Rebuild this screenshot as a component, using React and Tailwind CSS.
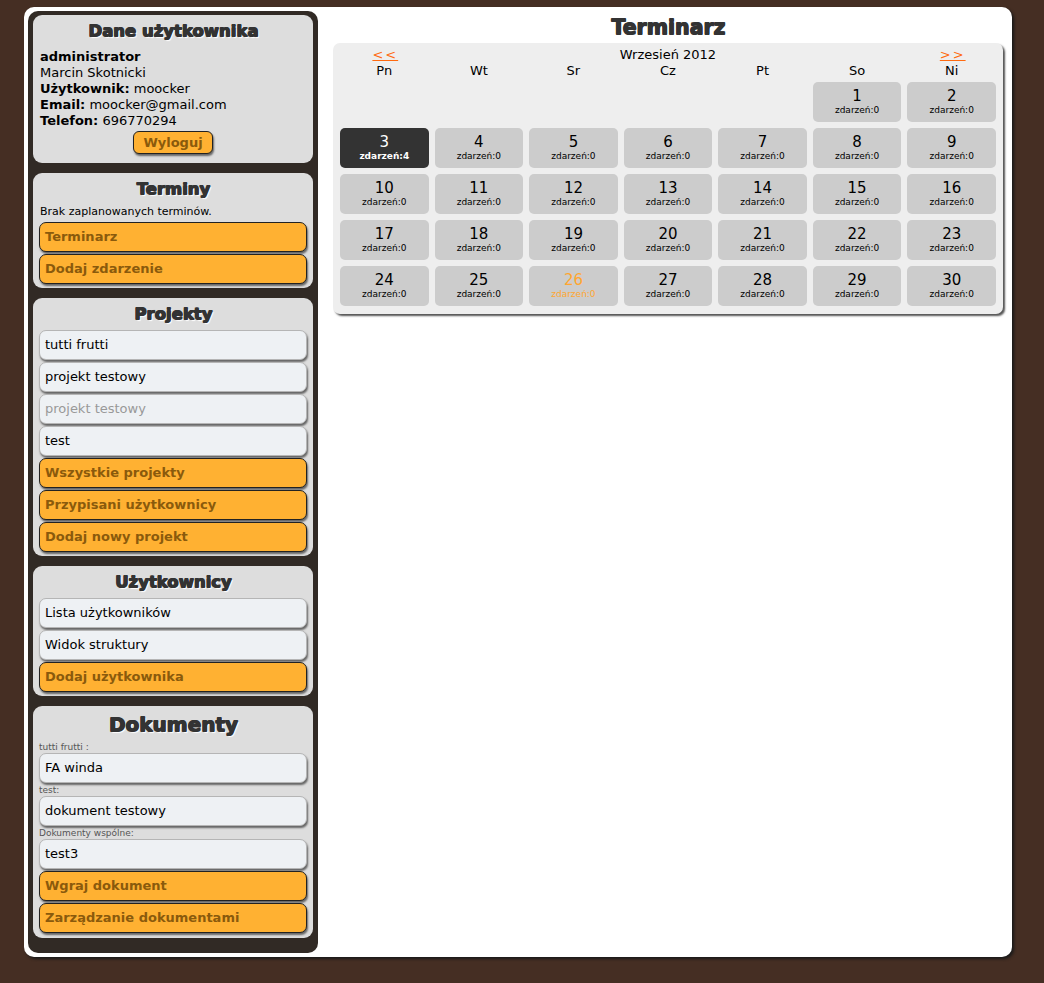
import React from 'react';

const heading = "text-[#333] font-bold text-center [text-shadow:1px_0_0_#333,0_0.6px_0_#333,1px_0.6px_0_#333,2px_2px_1px_#fff]";

const Card = ({ title, big, children, className = '' }) => (
  <div className={`bg-[#dddddd] rounded-[9px] px-[6px] pt-[4px] ${className}`}>
    <h2 className={`${heading} ${big ? 'text-[20px] leading-[28px]' : 'text-[16.5px] leading-[24px]'}`}>{title}</h2>
    {children}
  </div>
);

const Item = ({ children, faded }) => (
  <div className={`h-[30px] flex items-center pl-[5px] rounded-[7px] bg-[#eef1f4] border border-[#b5b5b5] shadow-[1px_2px_2px_rgba(0,0,0,0.55)] text-[13px] ${faded ? 'text-[#999]' : 'text-black'}`}>
    {children}
  </div>
);

const OrangeBtn = ({ children }) => (
  <div className="h-[30px] flex items-center pl-[5px] rounded-[7px] bg-[#ffb132] border border-[#222] shadow-[1px_2px_2px_rgba(0,0,0,0.55)] text-[13px] font-bold text-[#8a5a0c]">
    {children}
  </div>
);

const Label = ({ children }) => (
  <div className="text-[9px] leading-[11px] mt-[2px] text-[#555]">{children}</div>
);

const days = ['Pn', 'Wt', 'Sr', 'Cz', 'Pt', 'So', 'Ni'];

const cells = [
  null, null, null, null, null, 1, 2,
  3, 4, 5, 6, 7, 8, 9,
  10, 11, 12, 13, 14, 15, 16,
  17, 18, 19, 20, 21, 22, 23,
  24, 25, 26, 27, 28, 29, 30,
];

const DayCell = ({ day }) => {
  if (day === null) return <div className="h-[40px]" />;
  if (day === 3) {
    return (
      <div className="h-[40px] rounded-[5px] bg-[#333333] text-white text-center pt-[5px]">
        <div className="text-[15px] leading-[18px]">3</div>
        <div className="text-[9px] leading-[11px] font-bold">zdarzeń:4</div>
      </div>
    );
  }
  const today = day === 26;
  return (
    <div className={`h-[40px] rounded-[5px] bg-[#cccccc] text-center pt-[5px] ${today ? 'text-[#ffa630]' : 'text-black'}`}>
      <div className="text-[15px] leading-[18px]">{day}</div>
      <div className="text-[9px] leading-[11px]">zdarzeń:0</div>
    </div>
  );
};

export default function App() {
  return (
    <div className="min-h-screen bg-[#452e23] pt-[7px] pl-[24px] pb-[26px] font-['DejaVu_Sans',Verdana,sans-serif]">
      <div className="w-[988px] h-[950px] bg-white rounded-[10px] shadow-[2px_2px_3px_#1a1a1a] p-[4px] flex">
        {/* sidebar */}
        <div className="w-[290px] bg-[#312a25] rounded-[10px] px-[5px] pt-[4px] pb-[15px] flex flex-col gap-[10px]">
          <Card title="Dane użytkownika" className="pb-[9px]">
            <div className="text-[13px] leading-[16px] pl-[1px] mt-[6px] text-black">
              <div className="font-bold">administrator</div>
              <div>Marcin Skotnicki</div>
              <div><b>Użytkownik:</b> moocker</div>
              <div><b>Email:</b> moocker@gmail.com</div>
              <div><b>Telefon:</b> 696770294</div>
            </div>
            <div className="flex justify-center mt-[2px]">
              <div className="w-[80px] h-[23px] flex items-center justify-center rounded-[6px] bg-[#ffb132] border border-[#222] shadow-[1px_2px_2px_rgba(0,0,0,0.55)] text-[13px] font-bold text-[#8a5a0c]">
                Wyloguj
              </div>
            </div>
          </Card>

          <Card title="Terminy" className="pb-[4px]">
            <div className="text-[11px] leading-[14px] mt-[4px] pl-[1px] text-black">Brak zaplanowanych terminów.</div>
            <div className="flex flex-col gap-[2px] mt-[3px]">
              <OrangeBtn>Terminarz</OrangeBtn>
              <OrangeBtn>Dodaj zdarzenie</OrangeBtn>
            </div>
          </Card>

          <Card title="Projekty" className="pb-[4px]">
            <div className="flex flex-col gap-[2px] mt-[4px]">
              <Item>tutti frutti</Item>
              <Item>projekt testowy</Item>
              <Item faded>projekt testowy</Item>
              <Item>test</Item>
              <OrangeBtn>Wszystkie projekty</OrangeBtn>
              <OrangeBtn>Przypisani użytkownicy</OrangeBtn>
              <OrangeBtn>Dodaj nowy projekt</OrangeBtn>
            </div>
          </Card>

          <Card title="Użytkownicy" className="pb-[4px]">
            <div className="flex flex-col gap-[2px] mt-[4px]">
              <Item>Lista użytkowników</Item>
              <Item>Widok struktury</Item>
              <OrangeBtn>Dodaj użytkownika</OrangeBtn>
            </div>
          </Card>

          <Card title="Dokumenty" big className="pb-[5px]">
            <div className="flex flex-col mt-[2px]">
              <Label>tutti frutti :</Label>
              <Item>FA winda</Item>
              <Label>test:</Label>
              <Item>dokument testowy</Item>
              <Label>Dokumenty wspólne:</Label>
              <Item>test3</Item>
              <div className="flex flex-col gap-[2px] mt-[2px]">
                <OrangeBtn>Wgraj dokument</OrangeBtn>
                <OrangeBtn>Zarządzanie dokumentami</OrangeBtn>
              </div>
            </div>
          </Card>
        </div>

        {/* main */}
        <div className="ml-[15px] w-[670px]">
          <h1 className={`${heading} text-[20.5px] leading-[28px] mt-[1px] pt-[1px]`}>Terminarz</h1>
          <div className="mt-[2px] bg-[#eeeeee] rounded-[7px] shadow-[2px_2px_2px_#555] px-[7px] pt-[4px] pb-[8px]">
            <div className="grid grid-cols-7 gap-x-[6px] text-[13px] leading-[16px] text-black text-center">
              <div><span className="text-[#ff6a10] underline tracking-[2px] pl-[2px]">&lt;&lt;</span></div>
              <div className="col-span-5">Wrzesień 2012</div>
              <div><span className="text-[#ff6a10] underline tracking-[2px] pl-[2px]">&gt;&gt;</span></div>
              {days.map((d) => (
                <div key={d}>{d}</div>
              ))}
            </div>
            <div className="grid grid-cols-7 gap-[6px] mt-[3px]">
              {cells.map((d, i) => (
                <DayCell key={i} day={d} />
              ))}
            </div>
          </div>
        </div>
      </div>
    </div>
  );
}
